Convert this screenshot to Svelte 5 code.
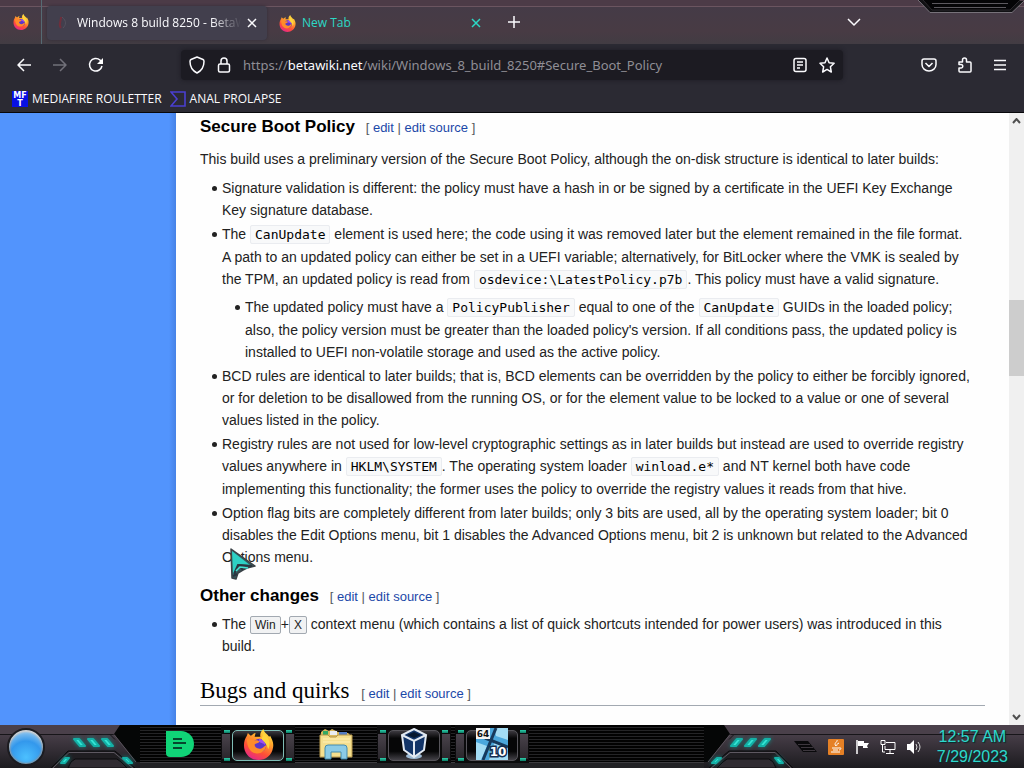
<script lang="ts">
	let url = $state('https://betawiki.net/wiki/Windows_8_build_8250#Secure_Boot_Policy');
	let editing = $state(false);
	const edits = ['edit', 'edit source'];
</script>

{#snippet firefox(size: number)}
	<svg width={size} height={size} viewBox="0 0 32 32" aria-hidden="true">
		<defs>
			<linearGradient id="fox{size}" x1=".8" y1="0" x2=".3" y2="1">
				<stop offset="0" stop-color="#fff04a" />
				<stop offset=".35" stop-color="#ffa52c" />
				<stop offset=".7" stop-color="#ff4f36" />
				<stop offset="1" stop-color="#e5268c" />
			</linearGradient>
		</defs>
		<path
			fill="url(#fox{size})"
			d="M18 8c-1-3 1-6 3-8 1 4 4 5 6 8l1-1c2 4 4 7 3 12-1 8-8 13-15 13C7 32 1 25 1 17c0-4 1-7 3-10l1-3 3 3c2-1 3-3 5-3l-1 4z"
		/>
		<circle cx="17" cy="17" r="7" fill="#5b36c9" />
		<path fill="#9d4df0" d="M17 10c4 1 6 3 6 7-2-3-5-2-7-4z" />
		<path
			fill="#ff8b2a"
			d="M4 10c4-2 6 0 8 2 2-1 4 0 5 1-1 2-4 2-5 3 0 3 3 5 7 4 3-1 3-3 5-3-1 6-6 9-11 8C7 24 4 18 4 10z"
		/>
		<path fill="#ffd43c" d="M21 4c6 4 8 11 5 17-1-6-5-8-7-11 1-2 2-4 2-6z" />
	</svg>
{/snippet}

{#snippet editLinks()}
	<span class="edit">
		[ {#each edits as label, i}{i ? ' | ' : ''}<a href="#{label.replace(' ', '-')}">{label}</a>{/each} ]
	</span>
{/snippet}

{#snippet lights(flip: boolean)}
	<svg class="lights" class:flip width="90" height="43" viewBox="6 0 90 43" aria-hidden="true">
		<path d="M76 0 70 9 92 37H96V0z" fill="#050606" />
		<path d="M70 9.500 92 37" fill="none" stroke="#5a535c" />
		<path d="M0 9.500H66l5 5" fill="none" stroke="#171519" />
		<path d="M7 43 24 26h47l21 17z" fill="#201e22" />
		<path d="M7 43 24 26h47l20 17" fill="none" stroke="#0b0a0c" />
		<path d="M8 44 25 27.500h45L90 44" fill="none" stroke="#5e5861" />
		<path d="m24 43 3-6 4-3h42l4 3 6 6z" fill="#302c32" stroke="#0b0a0c" />
		<g class="glow">
			<path d="M30 14h5l6 7h-5zM44 14h5l6 7h-5zM58 14h5l6 7h-5z" />
			<path d="m17 38 4-5h4l-4 5zM79 33h4l5 5h-4z" />
		</g>
	</svg>
{/snippet}

<div class="screen">
	<header class="browser">
		<div class="tabs">
			<svg class="ornament" width="112" height="14" viewBox="0 0 112 14" aria-hidden="true">
				<path d="M6 0 18 12.500h82L112 1" fill="#111114" stroke="#77727a" />
				<path d="M11 0 20 10h78l10-10" fill="#050507" stroke="#2b292d" />
				<path d="M20 3.500h76M22 7.500h72" stroke="#5c595f" />
			</svg>
			<button class="pinned" aria-label="Firefox View">{@render firefox(16)}</button>
			<div class="tab tab--active">
				<svg width="16" height="16" viewBox="0 0 16 16" aria-hidden="true">
					<path d="M6 2c0 5-3 8 0 11" fill="none" stroke="#6e2f3c" stroke-width="2" />
					<path d="M7 2c5 4 4 8 1 11" fill="none" stroke="#55515e" />
				</svg>
				<a class="tab-title" href="#page">Windows 8 build 8250 - BetaWiki</a>
				<button aria-label="Close tab">
					<svg width="10" height="10" viewBox="0 0 10 10"><path d="m1 1 8 8M9 1 1 9" /></svg>
				</button>
			</div>
			<div class="tab tab--new">
				{@render firefox(17)}
				<a class="tab-title" href="#new">New Tab</a>
				<button aria-label="Close new tab">
					<svg width="10" height="10" viewBox="0 0 10 10"><path d="m1 1 8 8M9 1 1 9" /></svg>
				</button>
			</div>
			<button class="add" aria-label="Open a new tab">
				<svg width="14" height="14" viewBox="0 0 14 14"><path d="M7 1v12M1 7h12" /></svg>
			</button>
			<button class="all-tabs" aria-label="List all tabs">
				<svg width="14" height="8" viewBox="0 0 14 8"><path d="m1 1 6 6 6-6" /></svg>
			</button>
		</div>

		<nav class="toolbar" aria-label="Navigation">
			<div class="nav-buttons">
				<button aria-label="Back">
					<svg width="16" height="16" viewBox="0 0 16 16"><path d="M15 8H2m6-6L2 8l6 6" /></svg>
				</button>
				<button class="disabled" aria-label="Forward" disabled>
					<svg width="16" height="16" viewBox="0 0 16 16"><path d="M1 8h13M8 2l6 6-6 6" /></svg>
				</button>
				<button aria-label="Reload">
					<svg width="16" height="16" viewBox="0 0 16 16">
						<path d="M14 9a6.300 6.300 0 1 1-2-6l2 3" />
						<path d="M15 1v6H9z" fill="#fff" stroke="none" />
					</svg>
				</button>
			</div>
			<div class="address">
				<button aria-label="Tracking protection">
					<svg width="16" height="18" viewBox="0 0 16 18">
						<path d="m8 1 6 2.500q1 .5 1 2C15 11 12 15 8 17 4 15 1 11 1 5.500q0-1.500 1-2z" />
					</svg>
				</button>
				<button aria-label="Site security">
					<svg width="14" height="18" viewBox="0 0 14 18">
						<path d="M4 8V5a3 3 0 0 1 6 0v3" />
						<rect x="1.500" y="8" width="11" height="8" rx="1.500" />
					</svg>
				</button>
				<label class="url">
					{#if !editing}
						<span>https://<b>betawiki.net</b>/wiki/Windows_8_build_8250#Secure_Boot_Policy</span>
					{/if}
					<input
						aria-label="Address"
						value={editing ? url : ''}
						onfocus={() => (editing = true)}
						onblur={() => (editing = false)}
						onchange={(e) => (url = e.currentTarget.value)}
					/>
				</label>
				<button aria-label="Reader view">
					<svg width="14" height="16" viewBox="0 0 14 16">
						<rect x="1" y="1.500" width="12" height="13" rx="2" />
						<path d="M4 5h6M4 8h6M4 11h3" />
					</svg>
				</button>
				<button aria-label="Bookmark this page">
					<svg width="16" height="16" viewBox="0 0 16 16">
						<path d="m8 1 2.100 4.700 5 .6-3.700 3.500.9 5.200L8 12.400 3.700 15l.9-5.200L1 6.300l5-.6z" />
					</svg>
				</button>
			</div>
			<div class="tools">
				<button aria-label="Pocket">
					<svg width="16" height="16" viewBox="0 0 16 16">
						<path d="M3 2h10q2 0 2 2v3.500a7 6.500 0 0 1-14 0V4q0-2 2-2zM4.500 6 8 9.500 11.500 6" />
					</svg>
				</button>
				<button aria-label="Extensions">
					<svg width="16" height="16" viewBox="0 0 16 16">
						<path d="M2 5h3.500V3a2 2 0 0 1 4 0v2H13q1 0 1 1v8q0 1-1 1H3q-1 0-1-1v-3h2a1.700 1.700 0 0 0 0-3.500H2z" />
					</svg>
				</button>
				<button aria-label="Menu">
					<svg width="14" height="12" viewBox="0 0 14 12"><path d="M1 1.500h12M1 6h12M1 10.500h12" /></svg>
				</button>
			</div>
		</nav>

		<nav class="bookmarks" aria-label="Bookmarks">
			<a href="#mediafire">
				<svg width="16" height="16" viewBox="0 0 16 16" aria-hidden="true">
					<rect width="16" height="16" fill="#0810e2" />
					<text x="8" y="7" class="pixel-text">MF</text>
					<text x="8" y="15" class="pixel-text">T</text>
				</svg>
				MEDIAFIRE ROULETTER
			</a>
			<a href="#video">
				<svg width="16" height="16" viewBox="0 0 16 16" aria-hidden="true">
					<path d="M1 1h14v14H1l6-7z" fill="none" stroke="#4a3fd0" stroke-width="1.600" />
				</svg>
				ANAL PROLAPSE
			</a>
		</nav>
	</header>

	<div class="viewport">
		<aside></aside>
		<main>
			<h3>Secure Boot Policy {@render editLinks()}</h3>
			<p>
				This build uses a preliminary version of the Secure Boot Policy, although the on-disk structure
				is identical to later builds:
			</p>
			<ul>
				<li>
					Signature validation is different: the policy must have a hash in or be signed by a
					certificate in the UEFI Key Exchange Key signature database.
				</li>
				<li>
					The <code>CanUpdate</code> element is used here; the code using it was removed later but the
					element remained in the file format. A path to an updated policy can either be set in a UEFI
					variable; alternatively, for BitLocker where the VMK is sealed by the TPM, an updated policy
					is read from <code>osdevice:\LatestPolicy.p7b</code>. This policy must have a valid
					signature.
					<ul>
						<li>
							The updated policy must have a <code>PolicyPublisher</code> equal to one of the
							<code>CanUpdate</code> GUIDs in the loaded policy; also, the policy version must be
							greater than the loaded policy's version. If all conditions pass, the updated policy is
							installed to UEFI non-volatile storage and used as the active policy.
						</li>
					</ul>
				</li>
				<li>
					BCD rules are identical to later builds; that is, BCD elements can be overridden by the
					policy to either be forcibly ignored, or for deletion to be disallowed from the running OS,
					or for the element value to be locked to a value or one of several values listed in the
					policy.
				</li>
				<li>
					Registry rules are not used for low-level cryptographic settings as in later builds but
					instead are used to override registry values anywhere in <code>HKLM\SYSTEM</code>. The
					operating system loader <code>winload.e*</code> and NT kernel both have code implementing
					this functionality; the former uses the policy to override the registry values it reads from
					that hive.
				</li>
				<li>
					Option flag bits are completely different from later builds; only 3 bits are used, all by the
					operating system loader; bit 0 disables the Edit Options menu, bit 1 disables the Advanced
					Options menu, bit 2 is unknown but related to the Advanced Options menu.
				</li>
			</ul>
			<h3>Other changes {@render editLinks()}</h3>
			<ul>
				<li>
					The <kbd>Win</kbd>+<kbd>X</kbd> context menu (which contains a list of quick shortcuts
					intended for power users) was introduced in this build.
				</li>
			</ul>
			<h2>Bugs and quirks {@render editLinks()}</h2>
			<svg class="cursor" width="28" height="34" viewBox="0 0 28 34" aria-hidden="true">
				<path
					d="m2 1 24 17-8 2-4 2-5 3-2 6-4-1z"
					fill="#35595d"
					stroke="#3b4247"
					stroke-width="1.500"
					stroke-linejoin="round"
				/>
				<path d="m3 3 18 14-11-1-6 11z" fill="#2ed0c4" />
				<path d="m5 26 4-9 14 1M10 17l4 5M4 28l4-2" fill="none" stroke="#2b3540" stroke-width="2" />
				<path d="m7 23 4-4 8 1" fill="none" stroke="#42e6d6" stroke-width="1.500" />
			</svg>
		</main>
		<div class="scrollbar">
			<button aria-label="Scroll up">
				<svg width="9" height="6" viewBox="0 0 9 6"><path d="m1 5 3.500-4L8 5" /></svg>
			</button>
			<div class="thumb"></div>
			<button aria-label="Scroll down">
				<svg width="9" height="6" viewBox="0 0 9 6"><path d="m1 1 3.500 4L8 1" /></svg>
			</button>
		</div>
	</div>

	<footer class="taskbar">
		<div class="start">
			<button class="orb" aria-label="Start"></button>
			{@render lights(false)}
		</div>
		<div class="apps">
			<button class="app" aria-label="Notes">
				<svg width="30" height="28" viewBox="0 0 30 28">
					<path d="M1 1h15a13 13 0 0 1 0 26H5q-4 0-4-4z" fill="#10d477" />
					<path d="M8 9h9M8 13h13M8 18h9" stroke="#06452d" stroke-width="2" />
				</svg>
			</button>
			<button class="app app--open app--focus" aria-label="Firefox">{@render firefox(31)}</button>
			<button class="app" aria-label="File Explorer">
				<svg width="34" height="32" viewBox="0 0 34 32">
					<path d="M2 4 6 1l4 2 3-2 6 3 10 1 2 2v22H2z" fill="#d9b95e" />
					<path d="M4 3h5v4H4z" fill="#32a965" />
					<path d="M11 3h7v4h-7z" fill="#e9edf2" />
					<path d="M20 4h8v4h-8z" fill="#547cc3" />
					<path d="M1 7h8l2 2h6l2-2h14v22H1z" fill="#f5df8e" stroke="#b7984c" />
					<path d="M4 11h27M4 14h27" stroke="#fff0b8" />
					<path d="M6 31V20q0-3 3-3h16q3 0 3 3v11h-6v-7H12v7z" fill="#8bcbe6" stroke="#458bad" />
				</svg>
			</button>
			<button class="app app--open" aria-label="VirtualBox">
				<svg width="30" height="32" viewBox="0 0 30 32">
					<ellipse cx="15" cy="28" rx="8" ry="3" fill="#9ebbd5" />
					<path d="m15 1 12 6-2 15-10 7-10-7L3 7z" fill="#123468" stroke="#e2e9f2" stroke-width="2" />
					<path d="m3 7 12 6 12-6M15 13v16" fill="none" stroke="#e2e9f2" stroke-width="2" />
					<path d="m8 7 7-3 7 3-7 3z" fill="#06172f" />
				</svg>
			</button>
			<button class="app app--open" aria-label="NTLite">
				<svg width="32" height="32" viewBox="0 0 32 32">
					<rect width="32" height="32" fill="#4ba7dc" />
					<path d="M18 0h14v12L20 8zM0 14l11 4L5 32H0zM19 13l13 6v13H13z" fill="#a4dcf4" />
					<path d="M20 0 7 32M9 10l23 9" stroke="#16395c" stroke-width="3" />
					<path d="M0 0h14v11H0z" fill="#f4f4f4" />
					<text x="7" y="9" class="badge-text">64</text>
					<text x="22" y="28" class="version-text">10</text>
				</svg>
			</button>
		</div>
		{@render lights(true)}
		<div class="tray">
			<svg width="24" height="14" viewBox="0 0 24 14" aria-hidden="true">
				<path d="M0 1h14l9 11H9z" fill="#09090b" />
				<path d="M4 4.500h12M7 7.500h12M9 10.500h12" stroke="#3d373e" />
			</svg>
			<button aria-label="Java">
				<svg width="16" height="16" viewBox="0 0 16 16">
					<rect width="16" height="16" rx="1" fill="#e58025" />
					<path
						d="M9 1c1 2-4 3-1 6M11 4c-2 1-3 2-2 3M4 9h7c3-1 2 2 0 2M5 11h5M3 13h9"
						fill="none"
						stroke="#fff"
					/>
				</svg>
			</button>
			<button aria-label="Action Center">
				<svg width="16" height="16" viewBox="0 0 16 16">
					<path d="M3 1v14" stroke="#fff" stroke-width="1.500" />
					<path d="M4 2h6v2h5l-2 3 1 2H9V7H4z" fill="#fff" />
				</svg>
			</button>
			<button aria-label="Network">
				<svg width="16" height="16" viewBox="0 0 16 16" fill="none" stroke="#fff">
					<path d="M6 3.500h9v7H5V7M10 11v3M6 14.500h8M2.500 6v7H5" />
					<path d="M1 1.500h4v4H1z" />
				</svg>
			</button>
			<button aria-label="Volume">
				<svg width="16" height="16" viewBox="0 0 16 16">
					<path d="M1 5h3l4-4v14l-4-4H1z" fill="#fff" />
					<path d="M10 5q2 3 0 6M12 3q4 5 0 10" fill="none" stroke="#d7d7d7" />
				</svg>
			</button>
			<time datetime="2023-07-29T00:57"><span>12:57 AM</span><span>7/29/2023</span></time>
		</div>
	</footer>
</div>

<style>
	:global(body) {
		margin: 0;
		background: #fff;
	}

	.screen {
		height: 100vh;
		display: flex;
		flex-direction: column;
		overflow: hidden;
		font-family: 'Liberation Sans', Arial, sans-serif;
	}

	button {
		display: flex;
		align-items: center;
		justify-content: center;
		padding: 0;
		border: 0;
		background: none;
		color: inherit;
		font: inherit;
	}

	svg {
		display: block;
		flex: none;
	}

	a {
		text-decoration: none;
		color: inherit;
	}

	.browser {
		flex: none;
		background: #2b2a33;
		border-bottom: 1px solid #08080b;
		color: #fbfbfe;
		font: 12px/16px 'Open Sans', 'Noto Sans', sans-serif;

		& button svg {
			fill: none;
			stroke: currentColor;
			stroke-width: 1.5;
			stroke-linejoin: round;
		}

		& .pinned svg {
			stroke: none;
		}
	}

	.tabs {
		position: relative;
		display: flex;
		height: 44px;
		background: linear-gradient(#4c3b47 0 6px, #6b5560 6px 7px, #453b47 7px, #483b44 70%, #423c43);
	}

	.ornament {
		position: absolute;
		right: 0;
		top: 0;
	}

	.pinned {
		width: 42px;
		border-right: 1px solid #566a73;
	}

	.tab {
		display: flex;
		align-items: center;
		gap: 6px;
		box-sizing: border-box;
		width: 220px;
		margin: 6px 0 4px;
		padding: 0 10px 0 8px;
	}

	.tab--active {
		margin-left: 5px;
		margin-right: 4px;
		border-radius: 4px;
		background: #423f4d;
		box-shadow: 0 0 3px #302d38;

		& .tab-title {
			-webkit-mask-image: linear-gradient(to right, #000 82%, transparent);
			mask-image: linear-gradient(to right, #000 82%, transparent);
		}
	}

	.tab--new {
		color: #2cd8c5;
	}

	.tab-title {
		flex: 1;
		overflow: hidden;
		white-space: nowrap;
	}

	.add {
		width: 36px;
		margin-left: 5px;
	}

	.all-tabs {
		width: 36px;
		margin: 0 152px 0 auto;
	}

	.toolbar {
		display: flex;
		align-items: center;
		height: 42px;
		padding: 0 17px 0 16px;
	}

	.nav-buttons,
	.tools {
		display: flex;
		gap: 20px;
	}

	.disabled {
		color: #72717a;
	}

	.address {
		flex: 1;
		display: flex;
		align-items: center;
		gap: 12px;
		height: 30px;
		margin: 0 78px 0 77px;
		padding: 0 8px;
		border-radius: 4px;
		background: #1c1b22;
		box-shadow: 0 0 4px #1c1b22;
	}

	.url {
		position: relative;
		flex: 1;
		height: 20px;
		overflow: hidden;
		font: 13px/20px 'Noto Sans', 'Open Sans', sans-serif;
		color: #8f8e95;
		white-space: nowrap;

		& b {
			color: #fbfbfe;
			font-weight: 400;
		}

		& input {
			position: absolute;
			inset: 0;
			width: 100%;
			padding: 0;
			border: 0;
			background: none;
			color: #fbfbfe;
			font: inherit;
			outline: 0;
		}
	}

	.bookmarks {
		display: flex;
		align-items: center;
		gap: 8px;
		height: 26px;
		padding: 0 12px;

		& a {
			display: flex;
			align-items: center;
			gap: 4px;
		}
	}

	.pixel-text {
		font: bold 8px 'DejaVu Sans', sans-serif;
		text-anchor: middle;
		fill: #fff;
	}

	.viewport {
		flex: 1;
		min-height: 0;
		display: flex;
		background: #fefefe;
	}

	aside {
		flex: none;
		width: 176px;
		background: linear-gradient(to right, #5294fd 96%, #4682e6);
	}

	main {
		position: relative;
		flex: 1;
		padding: 2px 24px 0;
		overflow: hidden;
		color: #222;
		font-size: 14px;
		line-height: 22px;
	}

	h2,
	h3 {
		margin: 0;
		color: #000;
	}

	h3 {
		font-size: 17px;
		line-height: 24px;
	}

	h2 {
		margin-top: 20px;
		border-bottom: 1px solid #a2a9b1;
		font: 23px/28px Georgia, 'Liberation Serif', serif;
	}

	.edit {
		margin-left: 6px;
		color: #54595d;
		font: 13px/20px 'Liberation Sans', Arial, sans-serif;

		& a {
			color: #1b48a8;
		}
	}

	p {
		margin: 9px 0 7px;
	}

	ul {
		margin: 5px 12px 0 22px;
		padding: 0;
		list-style: none;
	}

	li {
		position: relative;
		margin-bottom: 2px;

		&::before {
			content: '';
			position: absolute;
			left: -10px;
			top: 9px;
			width: 5px;
			height: 5px;
			border-radius: 50%;
			background: #222;
		}
	}

	li ul {
		margin-left: 23px;
		margin-right: 0;
	}

	ul + h3 {
		margin-top: 16px;
	}

	code {
		padding: 1px 4px;
		border: 1px solid #eaecf0;
		border-radius: 2px;
		background: #f8f9fa;
		color: #000;
		font: 13px/23px 'DejaVu Sans Mono', monospace;
	}

	kbd {
		padding: 1px 4px;
		border: 1px solid #a2a9b1;
		border-radius: 2px;
		background: #f1f2f3;
		font: 12px/16px 'Liberation Sans', Arial, sans-serif;
	}

	.cursor {
		position: absolute;
		left: 53px;
		top: 435px;
	}

	.scrollbar {
		flex: none;
		display: flex;
		flex-direction: column;
		width: 15px;
		background: #f0f0f0;

		& button {
			height: 16px;
		}

		& svg {
			fill: none;
			stroke: #505050;
			stroke-width: 2;
		}
	}

	.thumb {
		height: 76px;
		margin: 171px 0 auto;
		background: #cdcdcd;
	}

	.taskbar {
		flex: none;
		display: flex;
		height: 43px;
		background: linear-gradient(#4a404a 0 9px, #171519 9px 10px, #463d47 10px, #1c1b1f);
	}

	.start {
		display: flex;
		align-items: center;
	}

	.orb {
		width: 38px;
		height: 38px;
		margin: 0 5px 0 7px;
		border: 2px solid #1c1b1f;
		border-radius: 50%;
		background: radial-gradient(circle at 50% 80%, #4cc0ff, #3398ec 50%, #8cc4ee 80%);
		box-shadow:
			inset 0 2px 2px #d4d6d8,
			inset 0 0 2px 1px #8d9094;
	}

	.flip {
		transform: scaleX(-1);
	}

	.glow {
		fill: #35e6d6;
		stroke: #14b0a6;
		stroke-width: 2;
		stroke-linejoin: round;
		filter: drop-shadow(0 0 2px #0d8a84);
	}

	.apps {
		flex: 1;
		display: flex;
		gap: 4px;
		padding: 0 3px;
		background:
			linear-gradient(transparent 37px, #3d3c40 37px 38px, #222225 38px),
			repeating-linear-gradient(#020202 0 2px, #242426 2px 3px);
	}

	.app {
		position: relative;
		width: 74px;
		height: 38px;

		& svg {
			position: relative;
		}
	}

	/* side pillars, a rounded frame and four corner lamps */
	.app--open {
		--pillar: linear-gradient(#4a434c, #29262b);
		--lamp: linear-gradient(#2fd0ac, #0b7a64);
		background:
			var(--pillar) 1px 9px / 8px 25px no-repeat,
			var(--pillar) calc(100% - 1px) 9px / 8px 25px no-repeat,
			linear-gradient(#0b0b0c, #0b0b0c);

		&::before {
			content: '';
			position: absolute;
			inset: 5px 11px 2px;
			border: 1px solid #56545a;
			border-radius: 5px;
			background: linear-gradient(#3c393f, #060607 25% 70%, #434147);
		}

		&::after {
			content: '';
			position: absolute;
			inset: 5px 3px 2px;
			background:
				var(--lamp) 0 0 / 6px 3px no-repeat,
				var(--lamp) 100% 0 / 6px 3px no-repeat,
				var(--lamp) 0 100% / 6px 3px no-repeat,
				var(--lamp) 100% 100% / 6px 3px no-repeat;
		}
	}

	.app--focus::before {
		border-color: #7fbdb6;
	}

	.badge-text,
	.version-text {
		text-anchor: middle;
		font: bold 9px 'DejaVu Sans', sans-serif;
		fill: #111;
	}

	.version-text {
		font-size: 12px;
		fill: #fff;
		stroke: #142d50;
		stroke-width: 3px;
		paint-order: stroke;
	}

	.tray {
		display: flex;
		align-items: center;
		gap: 10px;
		padding-right: 16px;
	}

	time {
		display: flex;
		flex-direction: column;
		align-items: center;
		margin-left: 5px;
		color: #2cd8cc;
		font-size: 16px;
		line-height: 20px;
		text-shadow: 1px 1px 1px #052a2b;
	}
</style>
